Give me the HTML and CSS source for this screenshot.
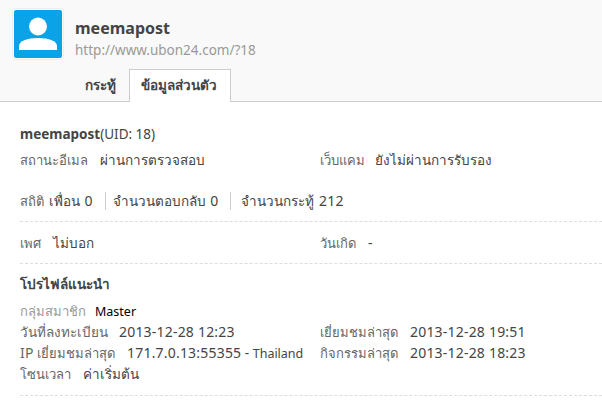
FILE: index.html
```html
<!DOCTYPE html>
<html>
<head>
	<title>meemapost</title>
	<meta charset="utf-8">
	<link rel="stylesheet" href="styles.css">
</head>
<body>
<div class="header">
	<div class="profile">
		<div class="avatar">
			<svg width="48" height="48" viewBox="0 0 48 48">
				<circle cx="24" cy="16.500" r="9" fill="#fff"/>
				<path d="M5 40v-4c0-5 8-8 19-8s19 3 19 8v4z" fill="#fff"/>
			</svg>
		</div>
		<div class="names">
			<h1>meemapost</h1>
			<p class="url">http://www.ubon24.com/?18</p>
		</div>
	</div>
	<ul class="tabs">
		<li>กระทู้</li>
		<li class="active">ข้อมูลส่วนตัว</li>
	</ul>
</div>

<div class="main">
	<h2><b>meemapost</b>(UID: 18)</h2>
	<div class="cols first">
		<p><em>สถานะอีเมล</em>ผ่านการตรวจสอบ</p>
		<p><em class="tight">เว็บแคม</em>ยังไม่ผ่านการรับรอง</p>
	</div>
	<p class="stats">
		<em class="label">สถิติ</em><span>เพื่อน <i>0</i></span><span>จำนวนตอบกลับ <i>0</i></span><span>จำนวนกระทู้ <i>212</i></span>
	</p>
	<div class="cols section">
		<p><em>เพศ</em>ไม่บอก</p>
		<p><em>วันเกิด</em><i>-</i></p>
	</div>
	<div class="section last">
		<h3>โปรไฟล์แนะนำ</h3>
		<p class="group"><em>กลุ่มสมาชิก</em><a>Master</a></p>
		<div class="cols">
			<p><em class="wide">วันที่ลงทะเบียน</em><i>2013-12-28 12:23</i></p>
			<p><em>เยี่ยมชมล่าสุด</em><i>2013-12-28 19:51</i></p>
		</div>
		<div class="cols">
			<p><em><i>IP</i> เยี่ยมชมล่าสุด</em><i>171.7.0.13:55355</i> - <a class="country">Thailand</a></p>
			<p><em>กิจกรรมล่าสุด</em><i>2013-12-28 18:23</i></p>
		</div>
		<p><em>โซนเวลา</em>ค่าเริ่มต้น</p>
	</div>
</div>
</body>
</html>
```

FILE: styles.css
```css
/* Reset */

* { margin: 0; padding: 0; }

body {
	background-color: #fff;
	color: #444;
	font-family: "Noto Sans", "Liberation Sans", sans-serif;
	font-size: 13.500px;
	line-height: 21px;
}

em {
	font-style: normal;
	font-size: 13px;
	line-height: 1;
	color: #666;
	margin-right: 12px;
}

i {
	font-style: normal;
	font-size: 14px;
	line-height: 1;
	letter-spacing: 0.200px;
}


/* Header */

.header {
	background-color: #f9f9f9;
	border-bottom: solid 1px #cdcdcd;
	height: 101px;
}

.profile {
	display: flex;
	padding: 8px 0 0 12px;
}

.avatar {
	width: 48px;
	height: 48px;
	padding: 1px;
	background-color: #fff;
	border: solid 1px #eee;
	border-radius: 3px;
	display: flex;
}

.avatar svg {
	background-color: #0aa3e8;
	border-radius: 2px;
}

.names {
	margin: 10px 0 0 11px;
}

.names h1 {
	font-size: 16px;
	line-height: 21px;
	font-weight: bold;
}

.url {
	color: #999;
	margin-top: 1px;
}

.tabs {
	display: flex;
	list-style: none;
	margin: 8px 0 0 73px;
}

.tabs li {
	height: 31px;
	line-height: 31px;
	padding: 0 12px 0 11px;
	font-weight: bold;
	border: solid 1px transparent;
	border-bottom: 0;
}

.tabs .active {
	background-color: #fff;
	border-color: #cdcdcd;
	height: 32px;
	padding: 0 13px 0 11px;
}


/* Main */

.main {
	padding: 0 0 0 20px;
}

.main h2 {
	font-size: 13.500px;
	font-weight: normal;
	margin-top: 22px;
}

.main h3 {
	font-size: 13.500px;
	margin-bottom: 6px;
}

.cols {
	display: flex;
}

.cols p {
	width: 300px;
	flex-shrink: 0;
	white-space: nowrap;
}

.first {
	margin-top: 5px;
}

.wide {
	font-size: 13.500px;
	margin-right: 11px;
}

.tight {
	margin-right: 10px;
}

.stats {
	margin-top: 20px;
	padding-bottom: 9px;
	border-bottom: dashed 1px #ddd;
}

.stats i {
	margin-left: 1px;
}

.label {
	margin-right: 5px;
}

.stats span {
	padding-right: 12px;
	margin-right: 7px;
	border-right: solid 1px #ccc;
}

.stats span:last-child {
	border-right: 0;
	padding-left: 3px;
}

.section {
	padding-top: 11px;
	padding-bottom: 9px;
	border-bottom: dashed 1px #ddd;
}

.last {
	padding-top: 10px;
	padding-bottom: 10px;
}

.group em {
	color: #999;
	margin-right: 9px;
}

.group a {
	color: #000;
	font-size: 12.500px;
	line-height: 1;
}

.country {
	font-size: 12.500px;
	line-height: 1;
}
```
